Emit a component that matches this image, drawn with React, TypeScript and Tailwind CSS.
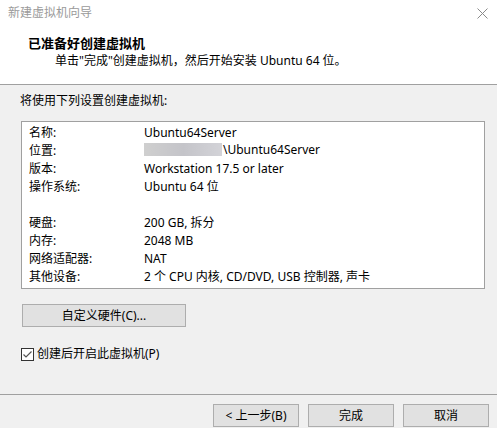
import React from "react";

type Row = { label: string; value: React.ReactNode } | null;

const BlurredPath = () => (
  <span className="inline-flex items-center">
    <span className="mr-[1px] inline-block h-[13px] w-[78px] bg-gradient-to-r from-[#cfcfcf] via-[#c4c4c9] to-[#d3d3d8] blur-[0.6px]" />
    \Ubuntu64Server
  </span>
);

const rows: Row[] = [
  { label: "名称:", value: "Ubuntu64Server" },
  { label: "位置:", value: <BlurredPath /> },
  { label: "版本:", value: "Workstation 17.5 or later" },
  { label: "操作系统:", value: "Ubuntu 64 位" },
  null,
  { label: "硬盘:", value: "200 GB, 拆分" },
  { label: "内存:", value: "2048 MB" },
  { label: "网络适配器:", value: "NAT" },
  { label: "其他设备:", value: "2 个 CPU 内核, CD/DVD, USB 控制器, 声卡" },
];

const WinButton = ({ children, className = "" }: { children: React.ReactNode; className?: string }) => (
  <button
    className={`flex h-[23px] items-center justify-center border border-[#adadad] bg-[#e1e1e1] text-[12px] text-black ${className}`}
  >
    {children}
  </button>
);

export default function App() {
  return (
    <div
      className="flex h-[428px] w-[497px] flex-col overflow-hidden bg-[#f0f0f0] text-[12px] text-black"
      style={{ fontFamily: '"Noto Sans", "Noto Sans CJK SC", sans-serif' }}
    >
      {/* header */}
      <div className="h-[85px] border-b border-[#a0a0a0] bg-white">
        <div className="flex h-[26px] items-center justify-between pl-[8px] pr-[9px]">
          <span className="text-[12px] text-[#9a9a9a]">新建虚拟机向导</span>
          <svg width="11" height="11" viewBox="0 0 11 11" className="mt-[1px]">
            <path d="M0.5 0.5 L10.5 10.5 M10.5 0.5 L0.5 10.5" stroke="#8a8a8a" strokeWidth="1" />
          </svg>
        </div>
        <div className="mt-[8px] pl-[28px] text-[13px] font-bold leading-[18px]">已准备好创建虚拟机</div>
        <div className="pl-[55px] leading-[18px]">单击"完成"创建虚拟机，然后开始安装 Ubuntu 64 位。</div>
      </div>

      {/* body */}
      <div className="flex flex-1 flex-col">
        <div className="mt-[7px] pl-[20px] leading-[18px]">将使用下列设置创建虚拟机:</div>
        <div className="ml-[21px] mt-[11px] h-[168px] w-[464px] border border-[#a0a0a0] bg-white pl-[7px] pt-[2px]">
          {rows.map((r, i) =>
            r ? (
              <div key={i} className="flex h-[18px] items-center">
                <span className="w-[115px] shrink-0">{r.label}</span>
                <span className="whitespace-nowrap">{r.value}</span>
              </div>
            ) : (
              <div key={i} className="h-[18px]" />
            )
          )}
        </div>

        <WinButton className="ml-[22px] mt-[15px] w-[164px]">自定义硬件(C)...</WinButton>

        <label className="ml-[21px] mt-[18px] flex items-center">
          <span className="flex h-[13px] w-[13px] items-center justify-center border border-[#333] bg-white">
            <svg width="11" height="11" viewBox="0 0 11 11">
              <path d="M1.5 5.5 L4 8 L9.5 2.5" fill="none" stroke="#555" strokeWidth="1.2" />
            </svg>
          </span>
          <span className="ml-[3px] leading-[18px]">创建后开启此虚拟机(P)</span>
        </label>

        <div className="mt-[31px] border-t border-[#a0a0a0]" />
        <div className="flex justify-end gap-[9px] pr-[8px] pt-[9px]">
          <WinButton className="w-[86px] h-[22px]">&lt; 上一步(B)</WinButton>
          <WinButton className="w-[86px] h-[22px]">完成</WinButton>
          <WinButton className="w-[86px] h-[22px]">取消</WinButton>
        </div>
      </div>
    </div>
  );
}
